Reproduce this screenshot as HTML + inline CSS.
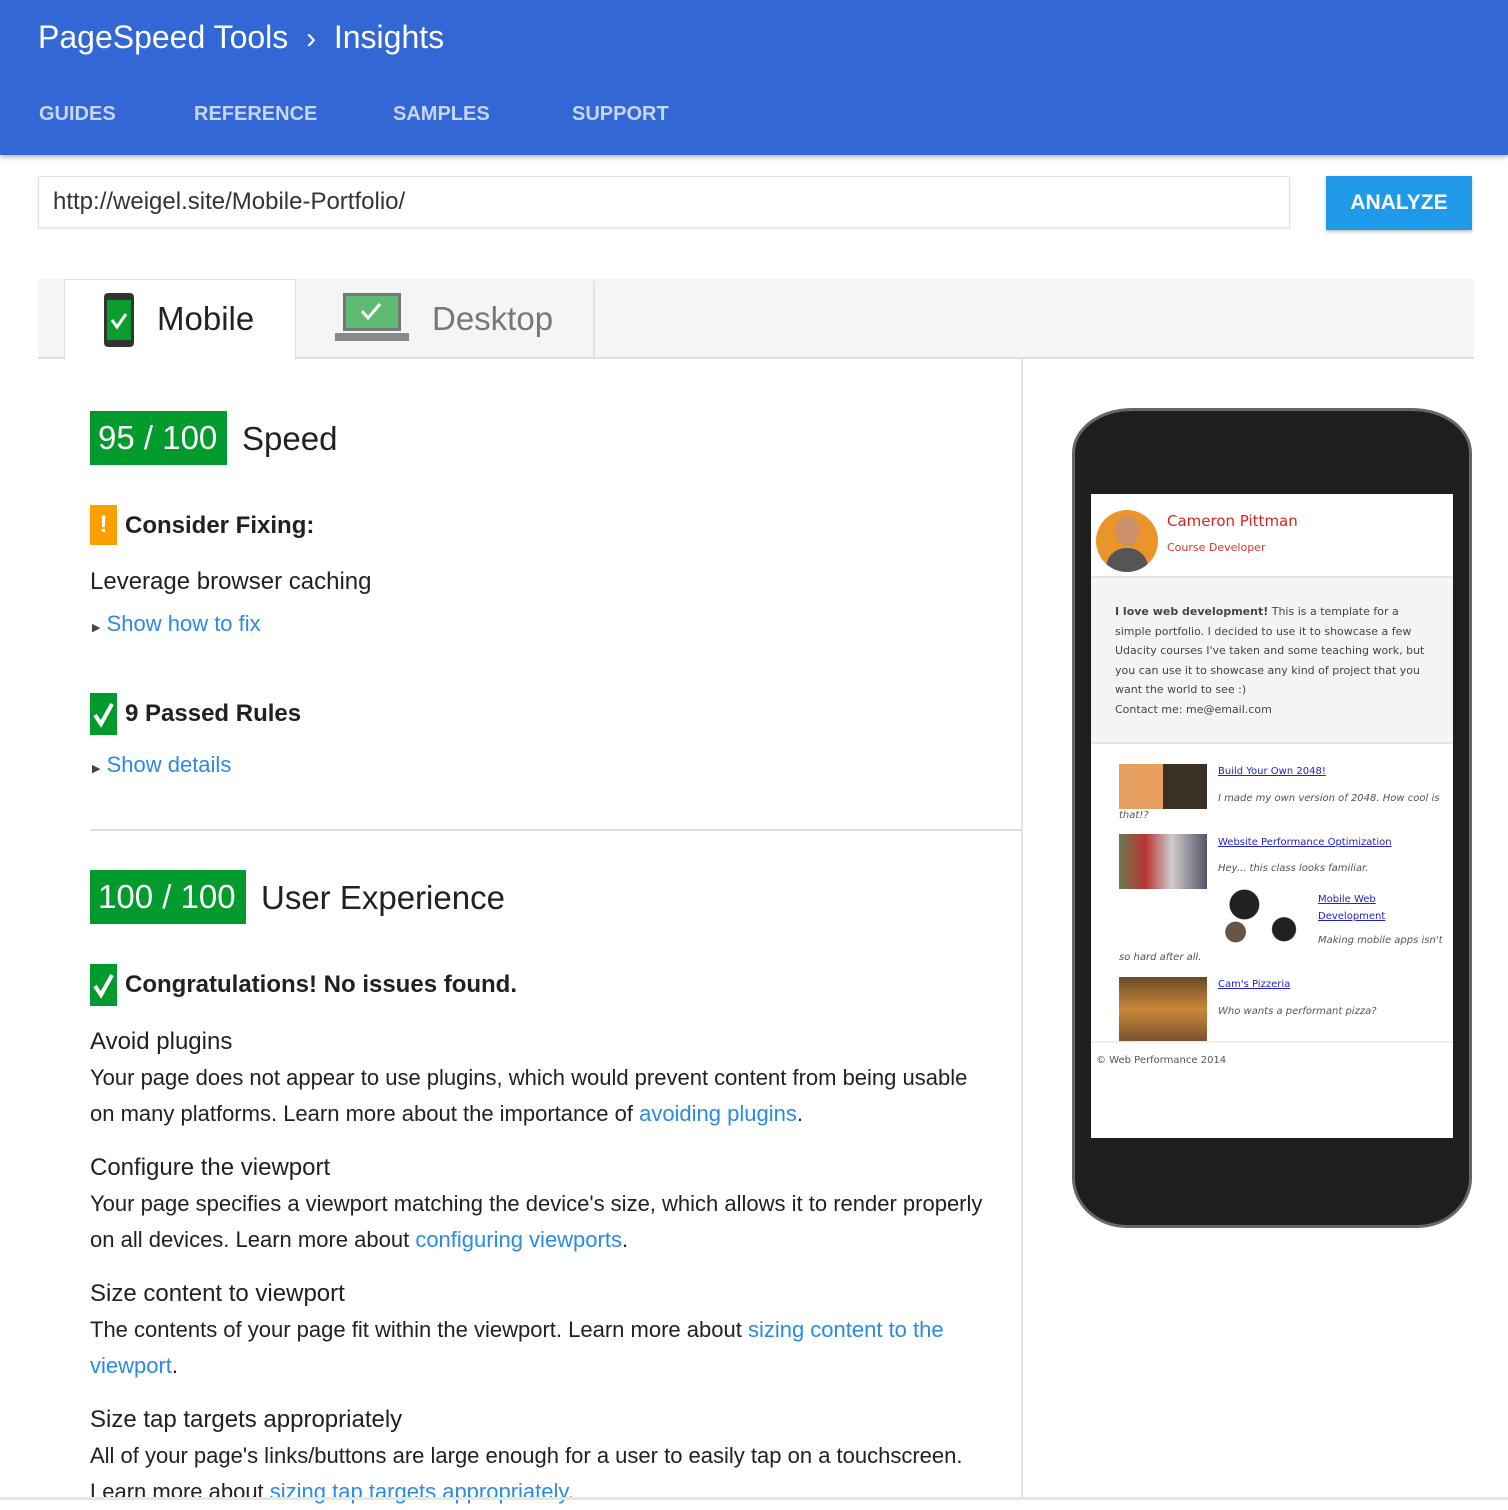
<!DOCTYPE html>
<html><head><meta charset="utf-8"><style>
*{margin:0;padding:0;box-sizing:border-box}
body{width:1508px;height:1500px;overflow:hidden;background:#fff;font-family:"Liberation Sans",sans-serif;color:#212121;position:relative}
.a{position:absolute;white-space:nowrap}
.hdr{position:absolute;left:0;top:0;width:1508px;height:155px;background:#3367d6;box-shadow:0 2px 5px rgba(0,0,0,.3)}
.nav{color:#c8d6f6;font-size:20px;font-weight:bold;top:103px}
.l{color:#2a8ae6}
.bx{background:#009a2d;color:#fff;font-size:33px;height:54px;line-height:54px;padding:0 10px 0 8px}
.h{font-size:33px}
.b{font-size:22px;line-height:36px;white-space:normal;width:920px}
.t{font-size:24px}
.ph{font-family:"DejaVu Sans",sans-serif}
</style></head><body>
<div class="hdr"></div>
<div class="a" style="left:38px;top:19px;color:#fff;font-size:32px">PageSpeed Tools &nbsp;<span style="font-size:30px">›</span>&nbsp; Insights</div>
<div class="a nav" style="left:39px">GUIDES</div>
<div class="a nav" style="left:194px">REFERENCE</div>
<div class="a nav" style="left:393px">SAMPLES</div>
<div class="a nav" style="left:572px">SUPPORT</div>

<div class="a" style="left:38px;top:176px;width:1252px;height:52px;border:1px solid #e0e0e0;box-shadow:0 1px 2px rgba(0,0,0,.1)"></div>
<div class="a" style="left:53px;top:188px;font-size:24px;color:#333">http://weigel.site/Mobile-Portfolio/</div>
<div class="a" style="left:1326px;top:176px;width:146px;height:54px;background:#1e9ae8;color:#fff;font-weight:bold;font-size:21px;line-height:54px;text-align:center;box-shadow:0 2px 3px rgba(0,0,0,.25)">ANALYZE</div>

<div class="a" style="left:38px;top:279px;width:1436px;height:80px;background:#f5f5f5;border-bottom:2px solid #e0e0e0"></div>
<div class="a" style="left:64px;top:279px;width:232px;height:81px;background:#fff;border:1px solid #ddd;border-bottom:none"></div>
<div class="a" style="left:593px;top:281px;width:2px;height:76px;background:#e3e3e3"></div>
<svg class="a" style="left:103px;top:292px" width="32" height="56"><rect x="1" y="1" width="30" height="54" rx="4" fill="#333"/><rect x="4" y="8" width="24" height="40" fill="#0a9c2c"/><path d="M9 28l5 7 9-13" stroke="#fff" stroke-width="3" fill="none"/></svg>
<div class="a" style="left:157px;top:300px;font-size:33px;color:#222">Mobile</div>
<svg class="a" style="left:334px;top:292px" width="76" height="52"><rect x="9" y="1" width="58" height="38" fill="#777"/><rect x="12" y="4" width="52" height="32" fill="#5fba73"/><path d="M28 19l6 7 12-14" stroke="#fff" stroke-width="3" fill="none"/><rect x="1" y="41" width="74" height="8" fill="#888"/></svg>
<div class="a" style="left:432px;top:300px;font-size:33px;color:#777">Desktop</div>

<div class="a" style="left:1021px;top:359px;width:2px;height:1141px;background:#e3e3e3"></div>

<div class="a bx" style="left:90px;top:411px">95 / 100</div>
<div class="a h" style="left:242px;top:420px">Speed</div>
<div class="a" style="left:90px;top:505px;width:27px;height:40px;background:#f9a000;color:#fff;font-weight:bold;font-size:24px;text-align:center;line-height:40px">!</div>
<div class="a t" style="left:125px;top:512px;font-weight:bold">Consider Fixing:</div>
<div class="a t" style="left:90px;top:568px">Leverage browser caching</div>
<div class="a l" style="left:92px;top:611px;font-size:22px"><span style="font-size:11px;color:#444">▶</span> Show how to fix</div>
<div class="a" style="left:90px;top:693px;width:27px;height:42px;background:#009a2d"><svg width="27" height="42"><path d="M5 22l6 9 11-20" stroke="#fff" stroke-width="4" fill="none"/></svg></div>
<div class="a t" style="left:125px;top:700px;font-weight:bold">9 Passed Rules</div>
<div class="a l" style="left:92px;top:752px;font-size:22px"><span style="font-size:11px;color:#444">▶</span> Show details</div>
<div class="a" style="left:90px;top:829px;width:932px;height:2px;background:#ddd"></div>

<div class="a bx" style="left:90px;top:870px">100 / 100</div>
<div class="a h" style="left:261px;top:879px">User Experience</div>
<div class="a" style="left:90px;top:964px;width:27px;height:42px;background:#009a2d"><svg width="27" height="42"><path d="M5 22l6 9 11-20" stroke="#fff" stroke-width="4" fill="none"/></svg></div>
<div class="a t" style="left:125px;top:971px;font-weight:bold">Congratulations! No issues found.</div>

<div class="a t" style="left:90px;top:1028px">Avoid plugins</div>
<div class="a b" style="left:90px;top:1060px;width:900px">Your page does not appear to use plugins, which would prevent content from being usable on many platforms. Learn more about the importance of <span class="l">avoiding plugins</span>.</div>
<div class="a t" style="left:90px;top:1154px">Configure the viewport</div>
<div class="a b" style="left:90px;top:1186px">Your page specifies a viewport matching the device's size, which allows it to render properly on all devices. Learn more about <span class="l">configuring viewports</span>.</div>
<div class="a t" style="left:90px;top:1280px">Size content to viewport</div>
<div class="a b" style="left:90px;top:1312px;width:900px">The contents of your page fit within the viewport. Learn more about <span class="l">sizing content to the viewport</span>.</div>
<div class="a t" style="left:90px;top:1406px">Size tap targets appropriately</div>
<div class="a b" style="left:90px;top:1438px">All of your page's links/buttons are large enough for a user to easily tap on a touchscreen. Learn more about <span class="l">sizing tap targets appropriately</span>.</div>

<!-- phone -->
<div class="a" style="left:1072px;top:408px;width:400px;height:820px;background:#1e1e1e;border-radius:60px 60px 55px 55px/45px 45px 50px 50px;border:3px solid #666"></div>
<div class="a" style="left:1091px;top:494px;width:362px;height:644px;background:#fff"></div>
<div class="a" style="left:1091px;top:576px;width:362px;height:168px;background:#f4f4f4;border-top:2px solid #e6e6e6;border-bottom:2px solid #e6e6e6"></div>
<div class="a" style="left:1096px;top:510px;width:62px;height:62px;border-radius:50%;background:#e9952a;overflow:hidden"><div style="position:absolute;left:19px;top:6px;width:24px;height:30px;border-radius:50%;background:#c9906a"></div><div style="position:absolute;left:10px;top:38px;width:42px;height:24px;border-radius:20px 20px 0 0;background:#555"></div></div>
<div class="a ph" style="left:1167px;top:512px;font-size:15px;color:#d22">Cameron Pittman</div>
<div class="a ph" style="left:1167px;top:541px;font-size:11px;color:#d33">Course Developer</div>
<div class="a ph" style="left:1115px;top:602px;font-size:11px;line-height:19.5px;color:#444;white-space:normal;width:315px"><b>I love web development!</b> This is a template for a simple portfolio. I decided to use it to showcase a few Udacity courses I've taken and some teaching work, but you can use it to showcase any kind of project that you want the world to see :)<br>Contact me: me@email.com</div>
<div class="a" style="left:1119px;top:764px;width:88px;height:45px;background:linear-gradient(90deg,#e8a060 50%,#3a3026 50%)"></div>
<div class="a ph" style="left:1218px;top:766px;font-size:10px;color:#22c;text-decoration:underline">Build Your Own 2048!</div>
<div class="a ph" style="left:1218px;top:793px;font-size:10px;color:#555;font-style:italic">I made my own version of 2048. How cool is</div>
<div class="a ph" style="left:1119px;top:810px;font-size:10px;color:#555;font-style:italic">that!?</div>
<div class="a" style="left:1119px;top:834px;width:88px;height:55px;background:linear-gradient(90deg,#6a7a50,#b33 30%,#ccc 60%,#556)"></div>
<div class="a ph" style="left:1218px;top:837px;font-size:10px;color:#22c;text-decoration:underline">Website Performance Optimization</div>
<div class="a ph" style="left:1218px;top:863px;font-size:10px;color:#555;font-style:italic">Hey... this class looks familiar.</div>
<div class="a" style="left:1218px;top:888px;width:88px;height:55px;background:radial-gradient(circle at 30% 30%,#222 20%,transparent 21%),radial-gradient(circle at 75% 75%,#222 15%,transparent 16%),radial-gradient(circle at 20% 80%,#654 12%,transparent 13%)"></div>
<div class="a ph" style="left:1318px;top:891px;font-size:10px;line-height:17px;color:#22c;text-decoration:underline">Mobile Web<br>Development</div>
<div class="a ph" style="left:1318px;top:935px;font-size:10px;color:#555;font-style:italic">Making mobile apps isn't</div>
<div class="a ph" style="left:1119px;top:952px;font-size:10px;color:#555;font-style:italic">so hard after all.</div>
<div class="a" style="left:1119px;top:977px;width:88px;height:65px;background:linear-gradient(#6b4a28,#c8883a 50%,#7a5030)"></div>
<div class="a ph" style="left:1218px;top:979px;font-size:10px;color:#22c;text-decoration:underline">Cam's Pizzeria</div>
<div class="a ph" style="left:1218px;top:1006px;font-size:10px;color:#555;font-style:italic">Who wants a performant pizza?</div>
<div class="a" style="left:1091px;top:1041px;width:362px;height:2px;background:#eee"></div>
<div class="a ph" style="left:1096px;top:1055px;font-size:10px;color:#555">© Web Performance 2014</div>
<div class="a" style="left:0;top:1497px;width:1508px;height:3px;background:#e8e8d8"></div>
</body></html>
